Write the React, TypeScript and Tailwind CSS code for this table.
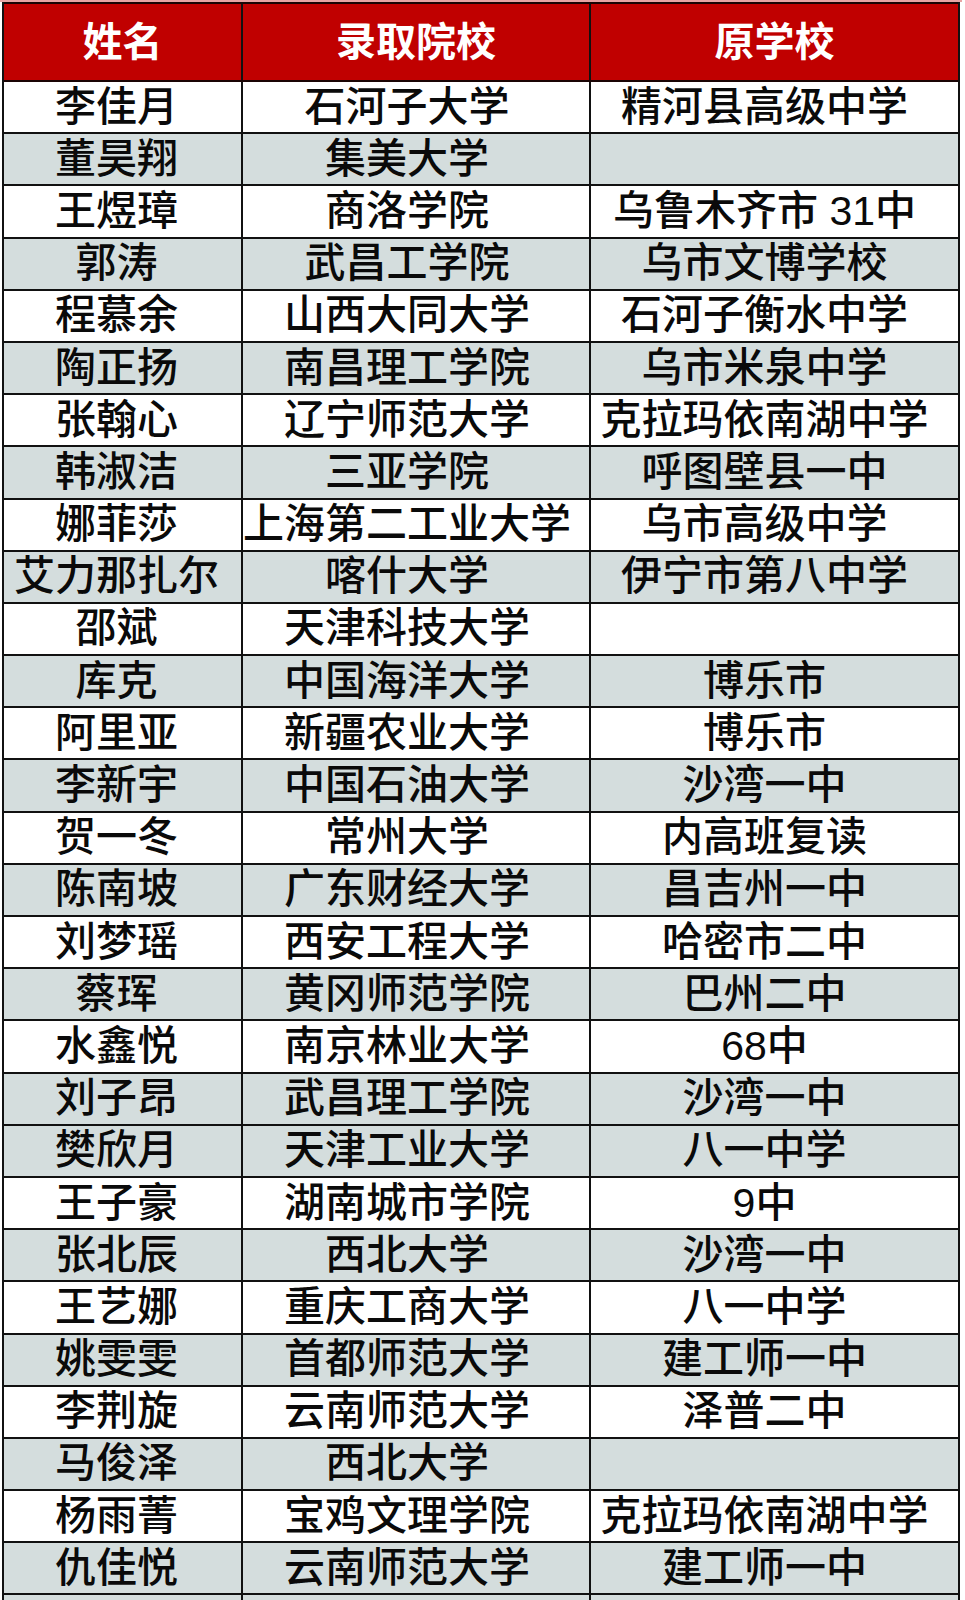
import React from 'react';

interface Row {
  name: string;
  college: string;
  school: string;
  shaded: boolean;
}

const data: [string, string, string][] = [
  ['李佳月', '石河子大学', '精河县高级中学'],
  ['董昊翔', '集美大学', ''],
  ['王煜璋', '商洛学院', '乌鲁木齐市 31中'],
  ['郭涛', '武昌工学院', '乌市文博学校'],
  ['程慕余', '山西大同大学', '石河子衡水中学'],
  ['陶正扬', '南昌理工学院', '乌市米泉中学'],
  ['张翰心', '辽宁师范大学', '克拉玛依南湖中学'],
  ['韩淑洁', '三亚学院', '呼图壁县一中'],
  ['娜菲莎', '上海第二工业大学', '乌市高级中学'],
  ['艾力那扎尔', '喀什大学', '伊宁市第八中学'],
  ['邵斌', '天津科技大学', ''],
  ['库克', '中国海洋大学', '博乐市'],
  ['阿里亚', '新疆农业大学', '博乐市'],
  ['李新宇', '中国石油大学', '沙湾一中'],
  ['贺一冬', '常州大学', '内高班复读'],
  ['陈南坡', '广东财经大学', '昌吉州一中'],
  ['刘梦瑶', '西安工程大学', '哈密市二中'],
  ['蔡珲', '黄冈师范学院', '巴州二中'],
  ['水鑫悦', '南京林业大学', '68中'],
  ['刘子昂', '武昌理工学院', '沙湾一中'],
  ['樊欣月', '天津工业大学', '八一中学'],
  ['王子豪', '湖南城市学院', '9中'],
  ['张北辰', '西北大学', '沙湾一中'],
  ['王艺娜', '重庆工商大学', '八一中学'],
  ['姚雯雯', '首都师范大学', '建工师一中'],
  ['李荆旋', '云南师范大学', '泽普二中'],
  ['马俊泽', '西北大学', ''],
  ['杨雨菁', '宝鸡文理学院', '克拉玛依南湖中学'],
  ['仇佳悦', '云南师范大学', '建工师一中'],
  ['', '', ''],
];

// the sheet breaks the stripe pattern once (樊欣月 is shaded like the row above)
const shadedRows = new Set([1, 3, 5, 7, 9, 11, 13, 15, 17, 19, 20, 22, 24, 26, 28, 29]);

const rows: Row[] = data.map(([name, college, school], i) => ({
  name,
  college,
  school,
  shaded: shadedRows.has(i),
}));

const font = { fontFamily: '"Liberation Sans", "Noto Sans CJK SC", sans-serif' };

export default function App() {
  return (
    <div className="w-[965px] bg-white overflow-hidden" style={font}>
      <div className="h-[2px] w-[962px] bg-[#e8a4a4]" />
      <div className="ml-[2px] w-[958px] border-l-2 border-r-2 border-[#111]">
        {/* Header */}
        <div className="grid grid-cols-[239px_348px_1fr] h-[80px] bg-[#c00000] border-t-2 border-b-2 border-[#1a0404] text-white text-[40px] font-bold leading-none">
          <div className="flex items-center justify-center border-r-2 border-[#111]">姓名</div>
          <div className="flex items-center justify-center border-r-2 border-[#111]">录取院校</div>
          <div className="flex items-center justify-center">原学校</div>
        </div>

        {/* Rows */}
        {rows.map((row, i) => (
          <div
            key={i}
            className={`grid grid-cols-[239px_348px_1fr] h-[52.2px] border-b-2 border-[#111] text-[41px] font-medium leading-none text-[#0a0a0a] whitespace-nowrap ${
              row.shaded ? 'bg-[#d4dddd]' : 'bg-white'
            }`}
          >
            <div className="flex items-center justify-center pr-[12px] border-r-2 border-[#111]">{row.name}</div>
            <div className="flex items-center justify-center pr-[18px] border-r-2 border-[#111]">{row.college}</div>
            <div className="flex items-center justify-center pr-[20px]">{row.school}</div>
          </div>
        ))}
      </div>
    </div>
  );
}
